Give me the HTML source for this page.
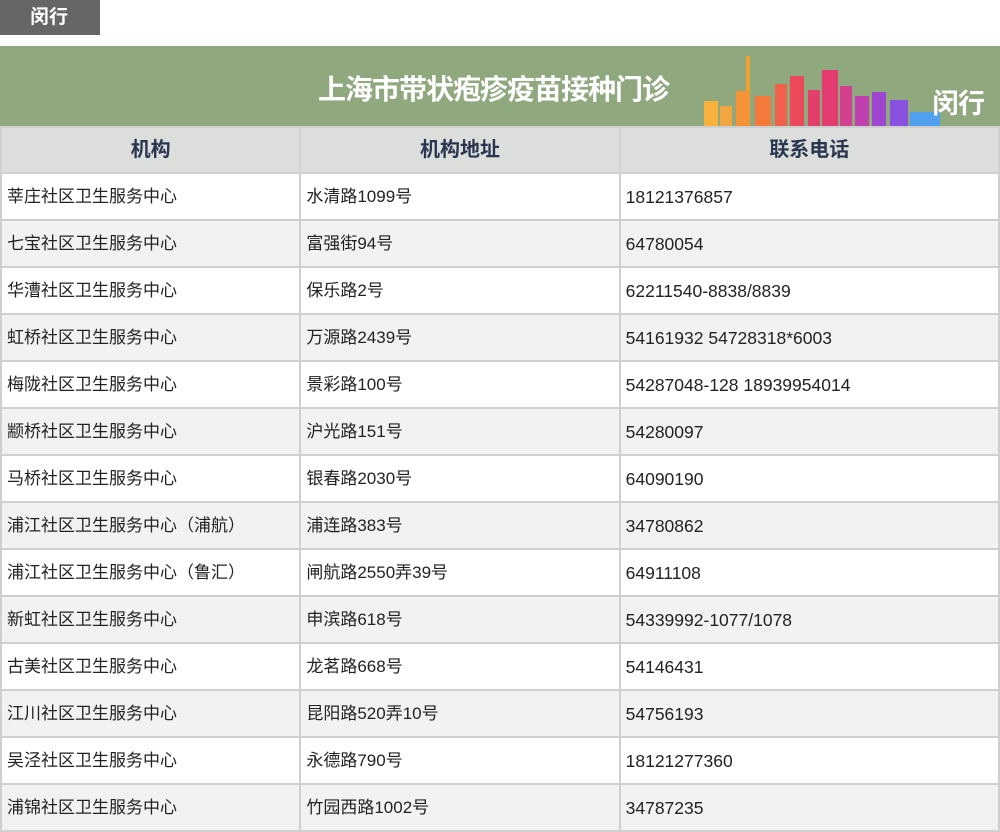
<!DOCTYPE html>
<html><head><meta charset="utf-8"><style>
*{margin:0;padding:0;box-sizing:border-box}
body{width:1000px;height:830px;background:#fff;font-family:"Liberation Sans","Noto Sans CJK SC",sans-serif;position:relative;overflow:hidden}
.tab{position:absolute;left:0;top:0;width:100px;height:35px;background:#666;color:#fff;font-weight:bold;font-size:19px;line-height:35px;padding-left:30px}
.banner{position:absolute;left:0;top:46px;width:1000px;height:80px;background:#8fa87e;overflow:hidden}
.banner .t{position:absolute;left:318px;top:22px;color:#fff;font-weight:bold;font-size:28px;letter-spacing:-1px}
.banner .m{position:absolute;left:932px;top:36px;color:#fff;font-weight:bold;font-size:27px;letter-spacing:-1px}
table{position:absolute;left:0;top:126px;border-collapse:collapse;width:1000px}
td,th{border:2px solid #cfcfcf;height:47px;font-size:17px;line-height:20px;color:#222;padding-left:5px;font-weight:normal;text-align:left;vertical-align:middle}
th{background:#dcdedc;color:#2a3550;font-weight:bold;font-size:20px;text-align:center;height:46px;padding:0}
tr:nth-child(odd) td{background:#f2f2f2}
tr:nth-child(even) td{background:#fff}
td:nth-child(3){font-size:17.5px;padding-top:1px}
</style></head><body>
<div class="tab">闵行</div>
<div class="banner">
<div class="t">上海市带状疱疹疫苗接种门诊</div>
<svg style="position:absolute;left:700px;top:0" width="250" height="80">
<rect x="46" y="10" width="4" height="70" fill="#f0a030"/>
<rect x="4" y="55" width="14" height="25" fill="#f6b23a"/>
<rect x="20" y="60" width="12" height="20" fill="#f3a640"/>
<rect x="36" y="45" width="14" height="35" fill="#f59436"/>
<rect x="55" y="50" width="16" height="30" fill="#f47a3c"/>
<rect x="75" y="38" width="12" height="42" fill="#f0604a"/>
<rect x="90" y="30" width="14" height="50" fill="#ec4a5a"/>
<rect x="108" y="44" width="12" height="36" fill="#e2406a"/>
<rect x="122" y="24" width="16" height="56" fill="#e23c70"/>
<rect x="140" y="40" width="12" height="40" fill="#d44090"/>
<rect x="155" y="50" width="14" height="30" fill="#c040b0"/>
<rect x="172" y="46" width="14" height="34" fill="#9e46d0"/>
<rect x="190" y="54" width="18" height="26" fill="#8a50e0"/>
<rect x="210" y="66" width="30" height="14" fill="#50a0f0"/>
</svg>
<div class="m">闵行</div>
</div>
<table>
<colgroup><col style="width:300px"><col style="width:320px"><col style="width:380px"></colgroup>
<tr><th>机构</th><th>机构地址</th><th>联系电话</th></tr>
<tr><td>莘庄社区卫生服务中心</td><td>水清路1099号</td><td>18121376857</td></tr>
<tr><td>七宝社区卫生服务中心</td><td>富强街94号</td><td>64780054</td></tr>
<tr><td>华漕社区卫生服务中心</td><td>保乐路2号</td><td>62211540-8838/8839</td></tr>
<tr><td>虹桥社区卫生服务中心</td><td>万源路2439号</td><td>54161932 54728318*6003</td></tr>
<tr><td>梅陇社区卫生服务中心</td><td>景彩路100号</td><td>54287048-128 18939954014</td></tr>
<tr><td>颛桥社区卫生服务中心</td><td>沪光路151号</td><td>54280097</td></tr>
<tr><td>马桥社区卫生服务中心</td><td>银春路2030号</td><td>64090190</td></tr>
<tr><td>浦江社区卫生服务中心（浦航）</td><td>浦连路383号</td><td>34780862</td></tr>
<tr><td>浦江社区卫生服务中心（鲁汇）</td><td>闸航路2550弄39号</td><td>64911108</td></tr>
<tr><td>新虹社区卫生服务中心</td><td>申滨路618号</td><td>54339992-1077/1078</td></tr>
<tr><td>古美社区卫生服务中心</td><td>龙茗路668号</td><td>54146431</td></tr>
<tr><td>江川社区卫生服务中心</td><td>昆阳路520弄10号</td><td>54756193</td></tr>
<tr><td>吴泾社区卫生服务中心</td><td>永德路790号</td><td>18121277360</td></tr>
<tr><td>浦锦社区卫生服务中心</td><td>竹园西路1002号</td><td>34787235</td></tr>
</table>
</body></html>
